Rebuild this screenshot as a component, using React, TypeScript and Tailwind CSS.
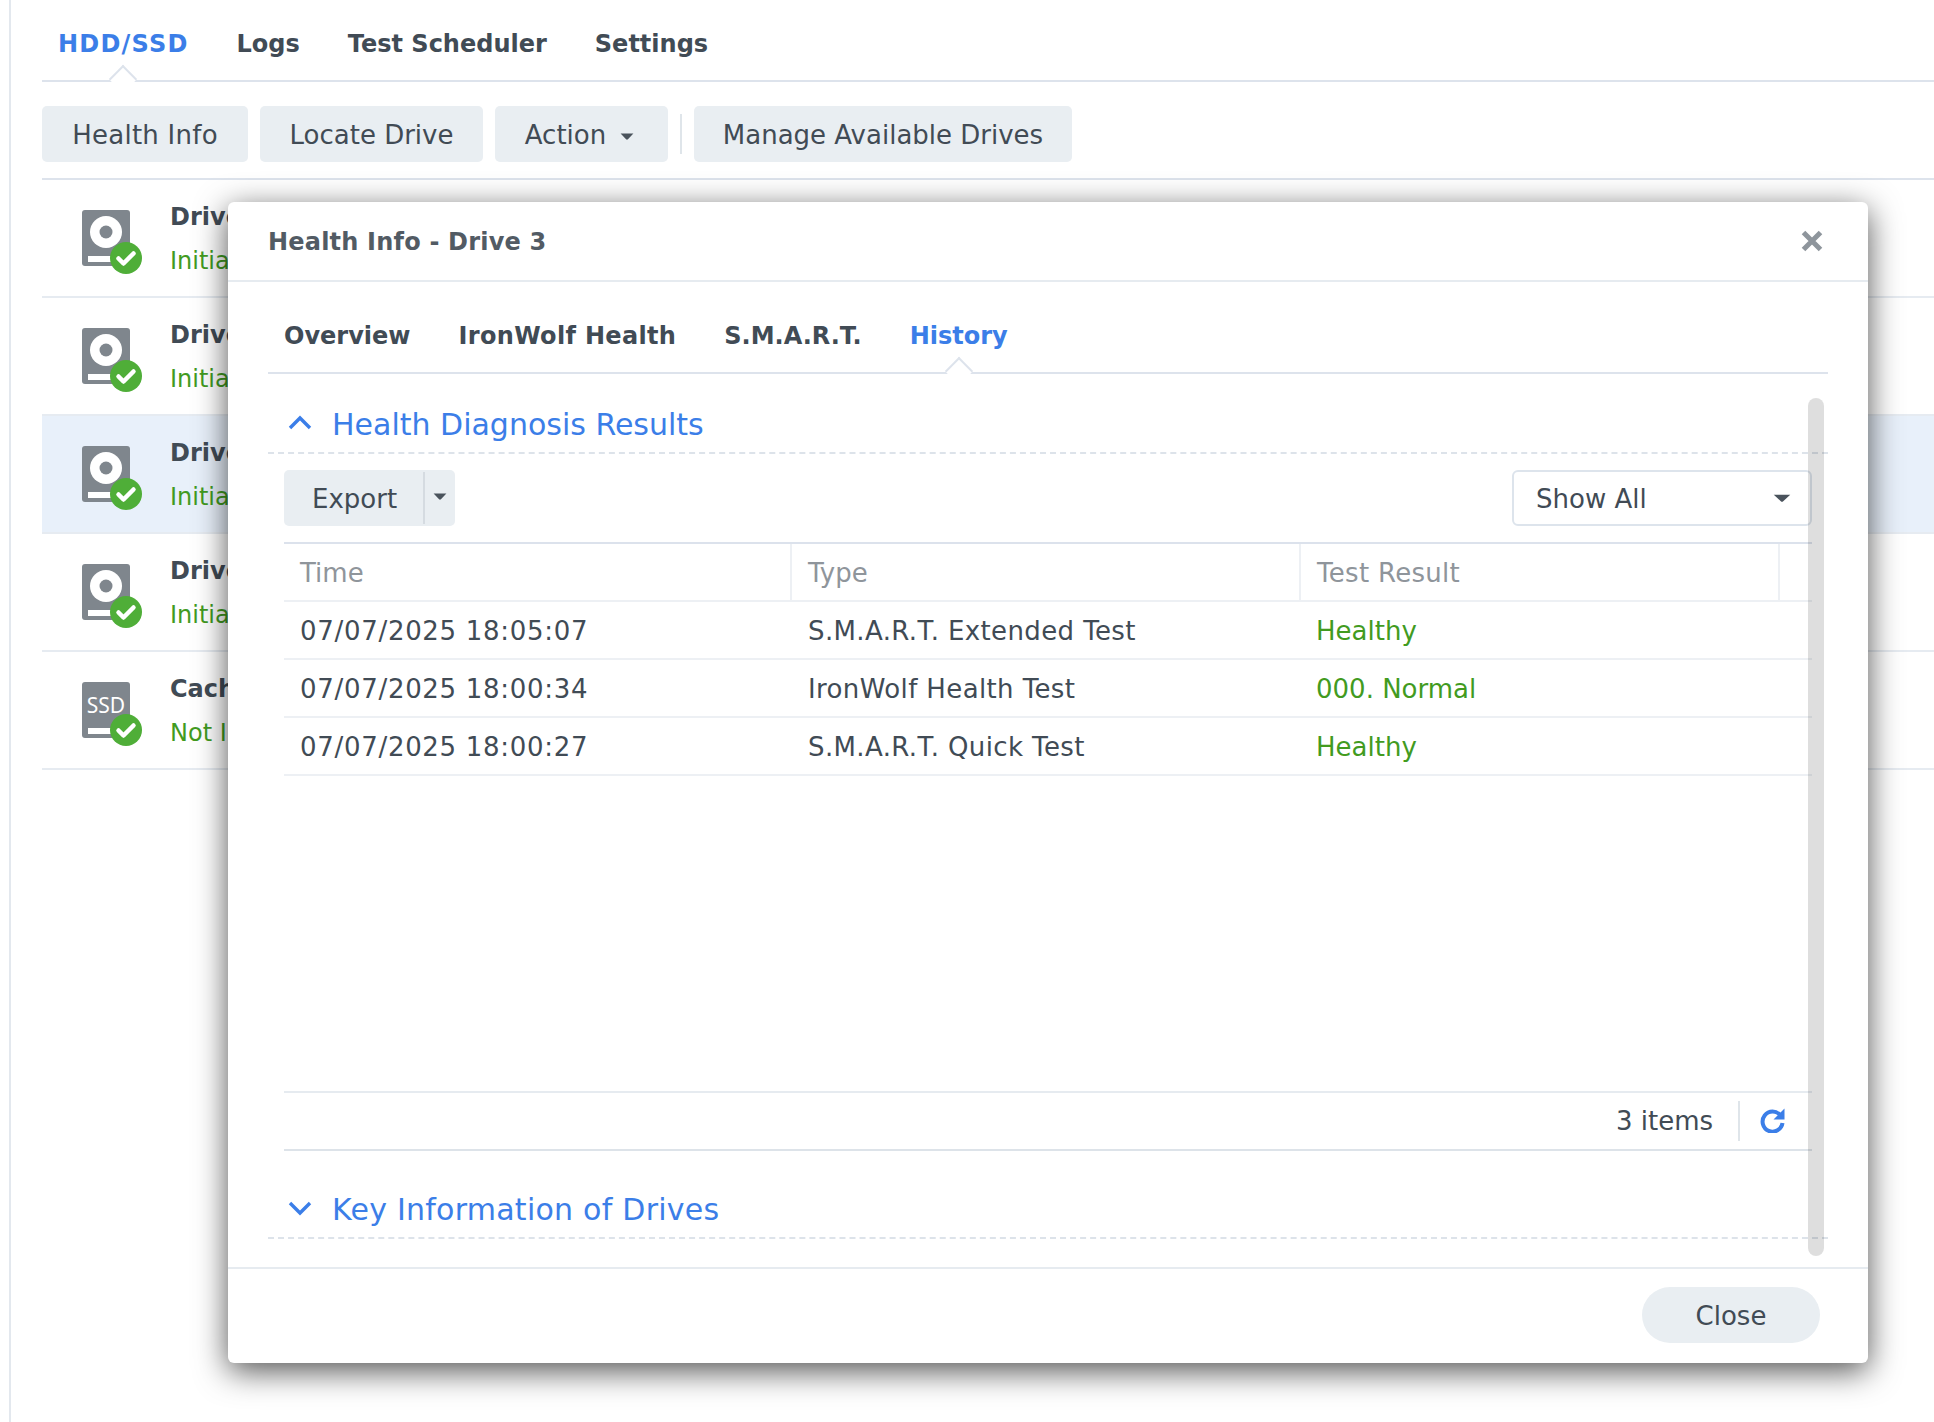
function Caret({ w, h, color = '#4a535c' }: { w: number; h: number; color?: string }) {
  return (
    <svg width={w} height={h} viewBox="0 0 12 6" preserveAspectRatio="none">
      <path d="M0.5 0.5h11L6.8 5.4a1.1 1.1 0 0 1-1.6 0z" fill={color} />
    </svg>
  );
}

function DriveIcon({ ssd }: { ssd?: boolean }) {
  return (
    <svg width="68" height="70" viewBox="0 0 68 70" className="shrink-0">
      <rect x="0" y="0" width="48" height="56" rx="3" fill="#7f868d" />
      {ssd ? (
        <text x="24" y="31" textAnchor="middle" fontSize="21" fill="#fff" fontFamily="Noto Sans, sans-serif">SSD</text>
      ) : (
        <>
          <circle cx="24" cy="22" r="16" fill="#fff" />
          <circle cx="24" cy="22" r="6.5" fill="#7f868d" />
        </>
      )}
      <rect x="6" y="46" width="30" height="6" fill="#fff" />
      <circle cx="44" cy="48" r="16" fill="#4fae38" />
      <path d="M36.5 48.5l5 5 10-10" fill="none" stroke="#fff" strokeWidth="4.5" strokeLinecap="round" strokeLinejoin="round" />
    </svg>
  );
}

function Row({ name, status, active, ssd }: { name: string; status: string; active?: boolean; ssd?: boolean }) {
  return (
    <div className={`h-[118px] border-b-2 border-[#e6ebf1] flex items-start pl-[40px] pt-[28px] ${active ? 'bg-[#e8f0fa] border-[#dfe6f0]' : ''}`}>
      <div className="pt-[2px]">
        <DriveIcon ssd={ssd} />
      </div>
      {/* the dialog covers everything past its left edge */}
      <div className="ml-[20px] -mt-[9px] w-[60px] overflow-hidden">
        <div className="text-[24px] leading-[36px] font-bold text-[#414b55] whitespace-nowrap">{name}</div>
        <div className="text-[24px] leading-[36px] mt-[8px] text-[#429b1f] whitespace-nowrap">{status}</div>
      </div>
    </div>
  );
}

function TabBar({ items, active }: { items: [string, string][]; active: string }) {
  return (
    <div className="flex gap-[48px]">
      {items.map(([t, extra]) => (
        <div key={t} className={`relative text-[24px] leading-[36px] font-bold whitespace-nowrap ${extra} ${t === active ? 'text-[#3b7ee8]' : 'text-[#414b55]'}`}>
          {t}
          {t === active && (
            <span className="absolute left-1/2 -bottom-[27px] w-[20px] h-[20px] -ml-[10px] rotate-45 bg-white border-l-2 border-t-2 border-[#dde3ec]" />
          )}
        </div>
      ))}
    </div>
  );
}

function ToolButton({ children, w }: { children: React.ReactNode; w: string }) {
  return (
    <div className={`h-[56px] ${w} pt-[2px] rounded-[5px] bg-[#e9eef2] text-[#414b55] text-[26px] leading-[54px] flex items-center justify-center whitespace-nowrap`}>
      {children}
    </div>
  );
}

function SectionHead({ title, open }: { title: string; open?: boolean }) {
  return (
    <div className={`flex items-center pl-[20px] ${open ? 'h-[80px] pt-[20px]' : 'h-[88px] pt-[28px]'} border-b-2 border-dashed border-[#dde3ea]`}>
      <svg width="24" height="16" viewBox="0 0 24 16">
        <path d={open ? 'M2 13L12 3l10 10' : 'M2 3l10 10L22 3'} fill="none" stroke="#3b7ee8" strokeWidth="3.4" />
      </svg>
      <div className={`ml-[20px] text-[30px] leading-[44px] text-[#3b7ee8] whitespace-nowrap ${open ? 'mt-[3px]' : 'mt-[3px] tracking-[0.25px]'}`}>{title}</div>
    </div>
  );
}

const history = [
  ['07/07/2025 18:05:07', 'S.M.A.R.T. Extended Test', 'Healthy'],
  ['07/07/2025 18:00:34', 'IronWolf Health Test', '000. Normal'],
  ['07/07/2025 18:00:27', 'S.M.A.R.T. Quick Test', 'Healthy'],
];

export default function App() {
  return (
    <div className="relative w-[1934px] h-[1422px] overflow-hidden bg-white font-['DejaVu_Sans',sans-serif]">
      {/* storage manager page behind the dialog */}
      <div className="ml-[9px] h-full border-l-2 border-[#e3e8ee] pl-[31px]">
        <div className="h-[82px] border-b-2 border-[#dde3ec] pl-[16px] pt-[26px]">
          <TabBar
            items={[['HDD/SSD', 'tracking-[1.2px]'], ['Logs', ''], ['Test Scheduler', ''], ['Settings', '']]}
            active="HDD/SSD"
          />
        </div>
        <div className="h-[98px] border-b-2 border-[#dde3ec] pt-[24px] flex gap-[12px]">
          <ToolButton w="w-[206px] tracking-[0.25px]">Health Info</ToolButton>
          <ToolButton w="w-[223px]">Locate Drive</ToolButton>
          <ToolButton w="w-[173px] pr-[4px]">
            Action
            <span className="ml-[14px] mt-[2px]"><Caret w={14} h={7} /></span>
          </ToolButton>
          <div className="w-[2px] h-[40px] mt-[8px] bg-[#dfe5ea]" />
          <ToolButton w="w-[378px]">Manage Available Drives</ToolButton>
        </div>
        <Row name="Drive 1" status="Initialized" />
        <Row name="Drive 2" status="Initialized" />
        <Row name="Drive 3" status="Initialized" active />
        <Row name="Drive 4" status="Initialized" />
        <Row name="Cache Device 1" status="Not Initialized" ssd />
      </div>

      {/* Health Info dialog */}
      <div className="absolute left-[228px] top-[202px] w-[1640px] h-[1161px] bg-white rounded-[6px] shadow-[0_8px_32px_rgba(0,0,0,0.68)] flex flex-col">
        <div className="h-[80px] shrink-0 border-b-2 border-[#e6ebf0] flex items-center justify-between pl-[40px] pr-[45px]">
          <div className="text-[24px] mt-[2px] tracking-[0.2px] font-bold text-[#525b64] whitespace-nowrap">Health Info - Drive 3</div>
          <svg width="22" height="22" viewBox="0 0 22 22">
            <path d="M2.5 2.5l17 17M19.5 2.5l-17 17" stroke="#8e959c" strokeWidth="5" />
          </svg>
        </div>

        <div className="relative flex-1 px-[40px]">
          <div className="h-[92px] border-b-2 border-[#dde3ec] pl-[16px] pt-[36px]">
            <TabBar
              items={[['Overview', ''], ['IronWolf Health', 'tracking-[0.33px]'], ['S.M.A.R.T.', ''], ['History', '']]}
              active="History"
            />
          </div>

          <SectionHead title="Health Diagnosis Results" open />

          <div className="px-[16px]">
            <div className="pt-[16px] flex justify-between">
              <div className="h-[56px] w-[171px] rounded-[5px] bg-[#e9eef2] flex items-center text-[26px] text-[#414b55]">
                <div className="w-[141px] pl-[28px] h-[52px] border-r-2 border-[#d5dbe1] flex items-center pt-[2px]">Export</div>
                <div className="flex-1 flex justify-center -mt-[4px] pr-[1px]"><Caret w={14} h={7} /></div>
              </div>
              <div className="h-[56px] w-[300px] rounded-[6px] border-2 border-[#dde4ec] flex items-center justify-between pl-[22px] pr-[19px] text-[26px] text-[#414b55]">
                <span className="mt-[2px]">Show All</span>
                <Caret w={18} h={8} />
              </div>
            </div>

            <div className="mt-[16px] border-t-2 border-[#dce2ec]">
              <div className="grid grid-cols-[508px_509px_479px_1fr] h-[58px] border-b-2 border-[#edf0f4] text-[26px] text-[#8f959b]">
                <div className="pl-[16px] pt-[2px] border-r-2 border-[#edf0f4] flex items-center">Time</div>
                <div className="pl-[16px] pt-[2px] border-r-2 border-[#edf0f4] flex items-center">Type</div>
                <div className="pl-[16px] pt-[2px] border-r-2 border-[#edf0f4] flex items-center tracking-[0.3px]">Test Result</div>
                <div />
              </div>
              {history.map(([time, type, result]) => (
                <div key={time} className="grid grid-cols-[508px_509px_1fr] h-[58px] pt-[3px] border-b-2 border-[#edf0f4] text-[26px] items-center">
                  <div className="pl-[16px] text-[#414b55] tracking-[0.7px]">{time}</div>
                  <div className="pl-[16px] text-[#414b55] tracking-[0.38px]">{type}</div>
                  <div className="pl-[15px] text-[#429b1f]">{result}</div>
                </div>
              ))}
            </div>

            <div className="mt-[315px] h-[60px] border-y-2 border-t-[#e6ebf0] border-b-[#dde3e9] flex items-center justify-end pr-[26px] text-[26px] text-[#414b55]">
              <span>3 items</span>
              <div className="w-[2px] h-[40px] bg-[#dfe5ea] ml-[25px] mr-[20px]" />
              <svg width="26" height="26" viewBox="0 0 26 26" className="-mt-[2px]">
                <path d="M20.5 8.5A10 10 0 1 0 22.5 16" fill="none" stroke="#3b7ee8" strokeWidth="4" />
                <path d="M24.5 1.5v11h-11z" fill="#3b7ee8" />
              </svg>
            </div>
          </div>

          <SectionHead title="Key Information of Drives" />

          {/* overlay scrollbar */}
          <div className="absolute top-[116px] left-[1580px] w-[16px] h-[858px] rounded-full bg-black/[0.13]" />
        </div>

        <div className="h-[96px] shrink-0 border-t-2 border-[#e6ebf0] flex justify-end pt-[18px] pr-[48px]">
          <div className="h-[56px] w-[178px] rounded-full bg-[#e9eef2] text-[26px] text-[#414b55] flex items-center justify-center pt-[2px]">Close</div>
        </div>
      </div>
    </div>
  );
}
